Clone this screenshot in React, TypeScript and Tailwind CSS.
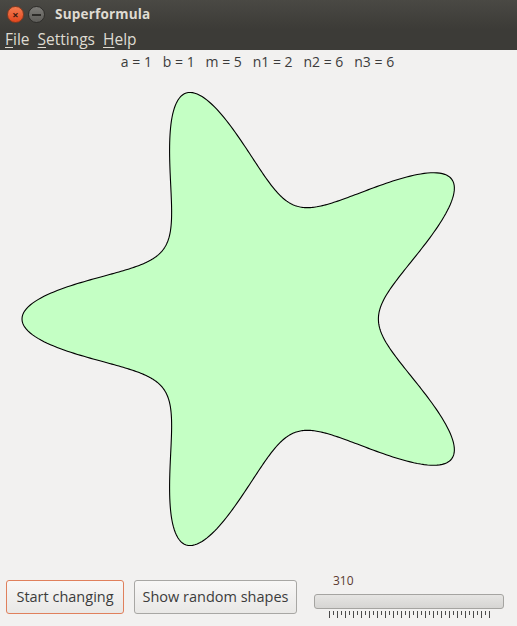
import React, { useMemo } from 'react';

const params = { a: 1, b: 1, m: 5, n1: 2, n2: 6, n3: 6 };

const superformulaPath = (cx: number, cy: number, scale: number) => {
  const { a, b, m, n1, n2, n3 } = params;
  const pts: string[] = [];
  const steps = 720;
  for (let i = 0; i <= steps; i++) {
    const phi = (i / steps) * Math.PI * 2;
    const t1 = Math.pow(Math.abs(Math.cos((m * phi) / 4) / a), n2);
    const t2 = Math.pow(Math.abs(Math.sin((m * phi) / 4) / b), n3);
    const r = Math.pow(t1 + t2, -1 / n1);
    const x = cx + scale * r * Math.cos(phi);
    const y = cy - scale * r * Math.sin(phi);
    pts.push(`${i === 0 ? 'M' : 'L'}${x.toFixed(2)},${y.toFixed(2)}`);
  }
  return pts.join(' ') + ' Z';
};

const MenuItem: React.FC<{ first: string; rest: string }> = ({ first, rest }) => (
  <span className="mr-[8px]">
    <span className="underline underline-offset-2">{first}</span>
    {rest}
  </span>
);

const Ticks: React.FC = () => {
  const ticks = Array.from({ length: 41 }, (_, i) => i);
  return (
    <svg width="190" height="8" className="block">
      {ticks.map((i) => (
        <line
          key={i}
          x1={15.5 + i * 4}
          x2={15.5 + i * 4}
          y1={0}
          y2={i % 2 === 0 ? 7 : 4}
          stroke="#4a4a4a"
          strokeWidth="1"
        />
      ))}
    </svg>
  );
};

export default function App() {
  const path = useMemo(() => superformulaPath(259.6, 319 - 72, 118.8), []);

  return (
    <div
      className="w-[517px] h-[626px] overflow-hidden bg-[#f2f1f0] flex flex-col"
      style={{ fontFamily: '"Open Sans", "DejaVu Sans", sans-serif' }}
    >
      {/* title bar */}
      <div className="h-[29px] bg-gradient-to-b from-[#4a4944] to-[#3c3b37] flex items-center pl-[7px] shrink-0">
        <div className="w-[17px] h-[17px] rounded-full bg-gradient-to-b from-[#f37b4f] to-[#e2461c] border border-[#8a3a1e] flex items-center justify-center">
          <span className="text-[#3a1a10] text-[11px] font-bold leading-none">×</span>
        </div>
        <div className="w-[17px] h-[17px] rounded-full bg-gradient-to-b from-[#7d7c78] to-[#5d5c58] border border-[#2e2d2a] ml-[4px] flex items-center justify-center">
          <div className="w-[9px] h-[2px] bg-[#2c2b28]" />
        </div>
        <span className="ml-[10px] text-[#dfdbd2] text-[13.5px] font-bold tracking-[0.2px]">Superformula</span>
      </div>

      {/* menu bar */}
      <div className="h-[21px] bg-[#3c3b37] flex items-center pl-[5px] text-[#dfdbd2] text-[15.5px] leading-none shrink-0">
        <MenuItem first="F" rest="ile" />
        <MenuItem first="S" rest="ettings" />
        <MenuItem first="H" rest="elp" />
      </div>

      {/* parameter label */}
      <div className="h-[22px] flex items-center justify-center text-[14px] text-[#3c3c3c] shrink-0 pr-[2px]">
        <span className="whitespace-pre">
          a = 1&nbsp;&nbsp;&nbsp;b = 1&nbsp;&nbsp;&nbsp;m = 5&nbsp;&nbsp;&nbsp;n1 = 2&nbsp;&nbsp;&nbsp;n2 = 6&nbsp;&nbsp;&nbsp;n3 = 6
        </span>
      </div>

      {/* canvas */}
      <div className="h-[498px] shrink-0">
        <svg width="517" height="498" className="block">
          <path d={path} fill="#c4ffc4" stroke="#000" strokeWidth="1.1" />
        </svg>
      </div>

      {/* bottom controls */}
      <div className="flex items-start pl-[6px] pt-[10px] gap-[10px]">
        <button className="h-[34px] w-[118px] rounded-[3px] border border-[#e0805c] bg-gradient-to-b from-[#f8f7f6] to-[#e9e8e6] text-[#3c3c3c] text-[14.5px]">
          Start changing
        </button>
        <button className="h-[34px] w-[163px] rounded-[3px] border border-[#a8a7a4] bg-gradient-to-b from-[#f8f7f6] to-[#e9e8e6] text-[#3c3c3c] text-[14.5px]">
          Show random shapes
        </button>
        <div className="ml-[7px] flex flex-col w-[190px] -mt-[7px]">
          <span className="pl-[19px] text-[12px] leading-[16px] text-[#5a3a30]">310</span>
          <div className="mt-[5px] h-[15px] rounded-[3px] border border-[#a5a4a1] bg-gradient-to-b from-[#e6e5e3] to-[#d6d5d3]" />
          <div className="mt-[2px]">
            <Ticks />
          </div>
        </div>
      </div>
    </div>
  );
}
